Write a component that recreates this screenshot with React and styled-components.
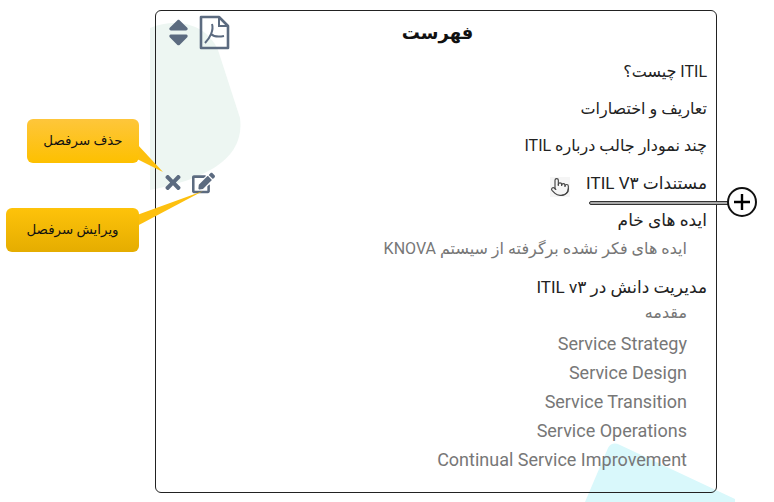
import React from 'react';
import styled, {createGlobalStyle} from 'styled-components';
import {FaSort, FaTimes, FaEdit} from 'react-icons/fa';
import {Pointer} from 'lucide-react';

const GlobalStyle = createGlobalStyle`
html, body {
	margin: 0;
	background: #fff;
}
body {
	font-family: Roboto, "Noto Sans", "DejaVu Sans", sans-serif;
}
`

const Page = styled.div`
position: relative;
width: 774px;
height: 502px;
overflow: hidden;
padding: 10px 0 0 155px;
box-sizing: border-box;
`

const Backdrop = styled.svg`
position: absolute;
left: 0;
top: 0;
`

const Panel = styled.div`
position: relative;
width: 562px;
height: 483px;
box-sizing: border-box;
border: 1.5px solid #222;
border-radius: 6px;
padding: 0 9px 0 6px;
`

const Header = styled.div`
height: 42px;
display: flex;
align-items: center;
position: relative;
`

const HeaderIcons = styled.div`
display: flex;
align-items: center;
gap: 4px;
color: #5c6b80;
`

const Title = styled.h1`
position: absolute;
left: 0;
right: 0;
top: 5px;
margin: 0;
text-align: center;
font-size: 18px;
line-height: 34px;
font-weight: 700;
color: #111;
padding-left: 6px;
`

const List = styled.div`
direction: rtl;
display: flex;
flex-direction: column;
`

const Row = styled.div`
height: ${props => props.$height || 37}px;
margin-top: ${props => props.$gap || 0}px;
display: flex;
align-items: center;
font-size: ${props => props.$size || 16}px;
color: #222;
position: relative;
`

const SubRow = styled(Row)`
height: ${props => props.$height || 29}px;
color: #777;
font-size: ${props => props.$size || 18}px;
padding-right: 20px;
`

const RowTools = styled.div`
position: absolute;
left: 0;
top: 50%;
transform: translateY(-50%);
display: flex;
align-items: center;
gap: 8px;
color: #5c6b80;
direction: ltr;
`

const HandCursor = styled.div`
position: absolute;
left: 388px;
top: 13px;
background: #f5f5f5;
color: #444;
line-height: 0;
`

const AddLine = styled.div`
position: absolute;
left: 433px;
top: 190px;
width: 140px;
height: 2px;
background: #aaa;
border: 1px solid #333;
border-radius: 2px;
`

const AddButton = styled.div`
position: absolute;
left: 571px;
top: 176px;
width: 30px;
height: 30px;
box-sizing: border-box;
border: 2px solid #111;
border-radius: 50%;
background: #fff;
color: #000;
display: flex;
align-items: center;
justify-content: center;
`

const Callout = styled.div`
position: absolute;
left: ${props => props.$left}px;
top: ${props => props.$top}px;
width: ${props => props.$width}px;
height: ${props => props.$height}px;
padding-bottom: 2px;
box-sizing: border-box;
border-radius: 6px;
background: linear-gradient(${props => props.$colors});
color: #111;
font-size: 13.4px;
display: flex;
align-items: center;
justify-content: center;
direction: rtl;
`

const Pointers = styled.svg`
position: absolute;
left: 0;
top: 0;
`

const chapters = [
	'ITIL چیست؟',
	'تعاریف و اختصارات',
	'چند نمودار جالب درباره ITIL'
]

const services = [
	'Service Strategy',
	'Service Design',
	'Service Transition',
	'Service Operations',
	'Continual Service Improvement'
]

const PdfIcon = () => (
	<svg width="31" height="35" viewBox="0 0 31 35" fill="none" stroke="#5c6b80">
		<path d="M2 2H20L29 11V33H2Z" strokeWidth="2.6" strokeLinejoin="round" />
		<path d="M20 2V11H29" strokeWidth="2" />
		<path d="M13 9C15 15 11 23 6 28M12 19C15 22 20 22 25 21" strokeWidth="2" />
	</svg>
)

const App = () => (
	<Page>
		<GlobalStyle />
		<Backdrop width="774" height="502">
			<path d="M150 28 C175 18 205 22 218 50 L240 118 C244 150 222 176 150 190 Z" fill="#edf6f2" />
			<path d="M585 502 L608 448 Q612 441 620 445 L735 499 L735 502 Z" fill="#d9f8fb" />
		</Backdrop>
		<Panel>
			<Header>
				<HeaderIcons>
					<FaSort size={33} />
					<PdfIcon />
				</HeaderIcons>
				<Title>فهرست</Title>
			</Header>
			<List>
				{chapters.map(chapter => <Row key={chapter}>{chapter}</Row>)}
				<Row $size={17}>
					مستندات ITIL V۳
					<RowTools>
						<FaTimes size={22} />
						<FaEdit size={23} />
					</RowTools>
					<HandCursor><Pointer size={20} strokeWidth={1.4} /></HandCursor>
				</Row>
				<Row $size={17} $gap={1} $height={36}>ایده های خام</Row>
				<SubRow $height={21} $size={16}>ایده های فکر نشده برگرفته از سیستم KNOVA</SubRow>
				<Row $size={17} $gap={10} $height={35}>مدیریت دانش در ITIL v۳</Row>
				<SubRow $height={17} $size={16}>مقدمه</SubRow>
				{services.map((service, index) => (
					<SubRow key={service} $gap={index === 0 ? 8 : 0}>{service}</SubRow>
				))}
			</List>
			<AddLine />
			<AddButton>
				<svg width="18" height="18" viewBox="0 0 18 18">
					<path d="M9 1V17M1 9H17" stroke="#000" strokeWidth="2.4" />
				</svg>
			</AddButton>
		</Panel>
		<Pointers width="774" height="502">
			<path d="M137 144 L163 172 L137 159 Z" fill="#fdc00f" />
			<path d="M137 215 L203 191 L137 226 Z" fill="#fdc00f" />
		</Pointers>
		<Callout $left={27} $top={119} $width={112} $height={44} $colors="#fec63b, #fdc000">حذف سرفصل</Callout>
		<Callout $left={6} $top={208} $width={133} $height={44} $colors="#fec30a, #e5ad00">ویرایش سرفصل</Callout>
	</Page>
)

export default App;
